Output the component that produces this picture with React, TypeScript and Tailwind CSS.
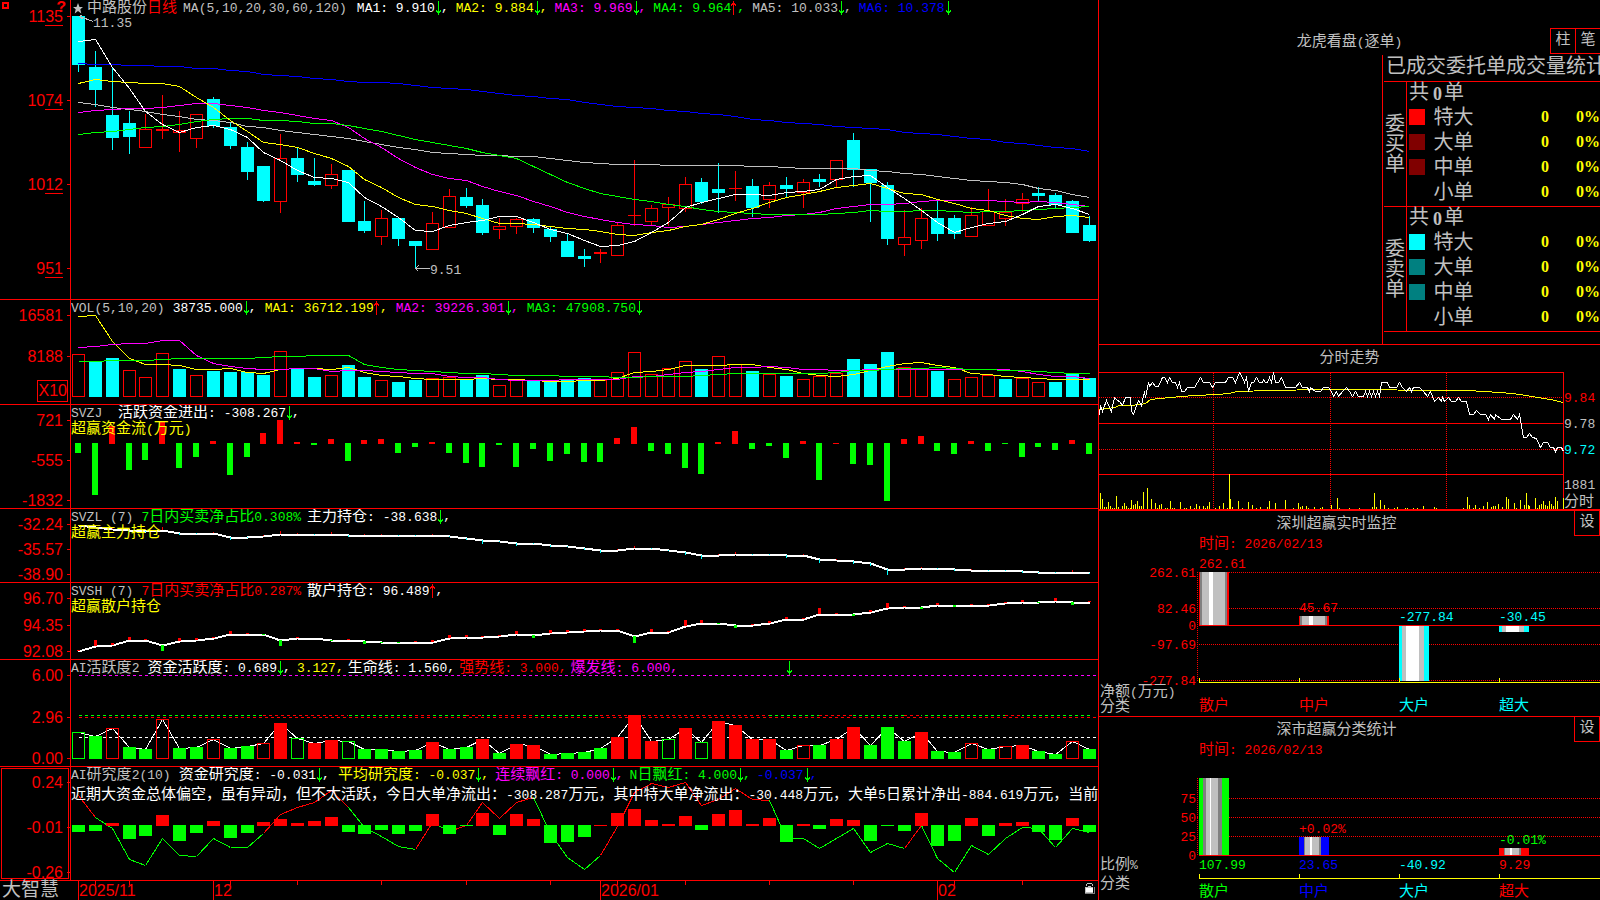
import React from "react";

const RED = "#ff0000";
const GREEN = "#00ff00";
const CYAN = "#00ffff";
const YELLOW = "#ffff00";
const MAGENTA = "#ff00ff";
const SILVER = "#c0c0c0";
const BLUE = "#0000ff";

// c = falling (filled), r = rising (hollow): [kind, high, top, bottom, low]
const candles: [string, number, number, number, number][] = [
  ["c", 16, 16, 65, 72], ["c", 51, 67, 90, 107], ["c", 67, 115, 138, 150], ["c", 111, 123, 137, 154],
  ["r", 114, 129, 148, 148], ["r", 95, 129, 131, 139], ["r", 111, 130, 133, 152], ["r", 114, 114, 139, 148],
  ["c", 97, 99, 126, 128], ["c", 123, 127, 146, 149], ["c", 142, 147, 172, 180], ["c", 166, 166, 201, 202],
  ["r", 134, 158, 202, 213], ["c", 147, 158, 175, 182], ["c", 158, 181, 185, 186], ["r", 164, 174, 186, 189],
  ["c", 170, 170, 222, 222], ["c", 201, 221, 231, 233], ["r", 210, 218, 237, 245], ["c", 218, 218, 239, 246],
  ["c", 241, 241, 246, 268], ["r", 212, 223, 250, 250], ["r", 189, 196, 228, 228], ["c", 188, 197, 206, 208],
  ["c", 199, 205, 233, 235], ["r", 218, 226, 230, 239], ["r", 218, 219, 227, 234], ["c", 218, 219, 228, 233],
  ["c", 226, 229, 237, 242], ["c", 233, 241, 257, 257], ["c", 249, 256, 259, 267], ["r", 249, 252, 254, 263],
  ["r", 222, 225, 256, 256], ["r", 160, 215, 216, 226], ["r", 205, 208, 222, 225], ["r", 197, 204, 208, 226],
  ["r", 177, 184, 209, 212], ["c", 178, 182, 202, 204], ["c", 163, 189, 193, 213], ["r", 171, 188, 189, 201],
  ["c", 179, 186, 208, 217], ["r", 182, 185, 200, 208], ["c", 177, 185, 189, 197], ["r", 179, 182, 193, 208],
  ["c", 174, 179, 182, 187], ["r", 160, 160, 180, 187], ["c", 133, 140, 170, 187], ["c", 169, 169, 183, 222],
  ["c", 182, 185, 239, 245], ["r", 210, 237, 245, 256], ["r", 208, 218, 241, 249], ["c", 200, 218, 234, 241],
  ["c", 215, 218, 234, 239], ["r", 207, 215, 237, 237], ["r", 189, 211, 226, 226], ["r", 199, 212, 219, 226],
  ["r", 193, 199, 204, 212], ["c", 187, 193, 196, 201], ["c", 193, 195, 205, 208], ["c", 200, 201, 233, 233],
  ["c", 216, 225, 241, 242],
];

const priceLines = [
  { color: BLUE, ys: [63, 64, 64, 65, 65, 66, 66, 68, 68, 70, 71, 74, 75, 76, 78, 79, 81, 82, 82, 83, 85, 87, 88, 89, 91, 93, 95, 96, 98, 99, 102, 104, 106, 107, 108, 110, 111, 113, 114, 116, 119, 120, 122, 123, 124, 126, 127, 128, 129, 132, 133, 134, 136, 138, 139, 142, 143, 145, 147, 148, 151] },
  { color: SILVER, ys: [102, 104, 107, 109, 111, 114, 116, 119, 120, 122, 126, 127, 130, 132, 134, 136, 138, 141, 144, 147, 149, 152, 153, 154, 155, 155, 156, 156, 158, 160, 162, 163, 164, 164, 164, 165, 165, 165, 165, 165, 166, 166, 167, 168, 168, 168, 168, 170, 171, 173, 174, 176, 178, 180, 181, 182, 184, 188, 190, 194, 197] },
  { color: MAGENTA, ys: [112, 110, 109, 108, 108, 107, 105, 103, 103, 105, 107, 110, 112, 115, 118, 120, 127, 138, 147, 158, 167, 174, 178, 180, 186, 191, 195, 201, 206, 212, 216, 219, 222, 224, 225, 227, 226, 224, 222, 220, 218, 217, 215, 214, 212, 208, 206, 204, 204, 203, 201, 200, 200, 200, 200, 201, 202, 201, 202, 204, 206] },
  { color: GREEN, ys: [134, 132, 131, 129, 127, 126, 124, 121, 119, 118, 118, 120, 120, 121, 123, 123, 125, 128, 131, 135, 139, 142, 145, 148, 152, 155, 158, 166, 174, 182, 188, 193, 196, 199, 201, 204, 206, 209, 211, 212, 213, 214, 214, 214, 214, 213, 212, 210, 211, 211, 210, 210, 211, 212, 211, 211, 210, 209, 208, 207, 206] },
  { color: YELLOW, ys: [83, 79, 81, 82, 83, 83, 86, 97, 107, 120, 131, 142, 144, 147, 153, 158, 166, 179, 187, 197, 204, 206, 210, 213, 218, 223, 223, 224, 226, 228, 229, 231, 234, 235, 232, 230, 226, 224, 219, 213, 208, 202, 197, 194, 191, 187, 185, 183, 188, 193, 194, 199, 203, 208, 210, 215, 218, 219, 216, 215, 217] },
  { color: "#ffffff", ys: [41, 39, 67, 88, 111, 124, 132, 127, 125, 129, 137, 152, 160, 170, 177, 178, 182, 197, 206, 217, 230, 231, 225, 222, 220, 216, 216, 222, 229, 233, 240, 246, 245, 241, 232, 222, 207, 202, 198, 194, 194, 195, 192, 191, 189, 179, 176, 175, 187, 198, 210, 222, 232, 227, 223, 221, 214, 206, 204, 208, 214] },
];

const volumeKinds = "rccrrrcrccccrccrccrccrrccrrcccc" + "rrrrrrcrrcrcrrrcccrrcrrrcrrccc";
const volumes = [43, 35, 39, 27, 20, 44, 28, 22, 26, 25, 25, 22, 46, 28, 20, 22, 32, 20, 17, 15, 17, 19, 20, 18, 22, 12, 17, 16, 15, 17, 19, 17, 25, 45, 23, 29, 36, 28, 41, 33, 26, 23, 21, 18, 21, 24, 38, 33, 45, 30, 28, 26, 18, 20, 22, 18, 19, 15, 15, 23, 19];
const volumeLines = [
  { color: YELLOW, ys: [16, 15, 41, 58, 64, 64, 65, 69, 69, 68, 72, 73, 69, 68, 68, 69, 67, 72, 75, 76, 78, 79, 79, 79, 78, 79, 79, 80, 81, 81, 80, 80, 78, 72, 71, 69, 65, 65, 65, 64, 64, 67, 69, 73, 75, 76, 74, 70, 66, 63, 62, 65, 67, 73, 74, 76, 77, 78, 79, 79, 79] },
  { color: MAGENTA, ys: [47, 46, 44, 43, 43, 40, 40, 55, 63, 66, 68, 69, 69, 68, 68, 71, 70, 70, 71, 72, 73, 73, 76, 77, 77, 79, 80, 80, 80, 79, 79, 79, 79, 76, 76, 74, 72, 71, 69, 67, 67, 66, 67, 69, 69, 70, 70, 69, 69, 69, 69, 69, 69, 69, 69, 69, 71, 74, 76, 76, 78] },
  { color: GREEN, ys: [61, 61, 60, 60, 60, 59, 58, 58, 58, 58, 58, 57, 56, 56, 55, 55, 55, 64, 67, 69, 70, 71, 72, 73, 73, 74, 75, 75, 75, 76, 76, 76, 77, 77, 76, 76, 76, 75, 74, 73, 73, 73, 73, 73, 73, 72, 70, 70, 69, 68, 68, 67, 68, 69, 69, 70, 70, 71, 72, 73, 73] },
];

const flows = [-10, -52, 18, -27, -17, 23, -25, -14, 3, -32, -14, 11, 24, 2, -2, 5, -18, 4, 5, -10, -4, 2, -10, -20, -24, -2, -24, -6, -18, -11, -19, -19, 6, 17, -8, -11, -25, -31, 2, 13, -6, -3, -15, 3, -37, 1, -21, -22, -58, 5, 8, -8, -11, 3, -8, -1, -14, -4, -7, 4, -11];

const mainHold = [16, 18, 20, 21, 22, 21, 24, 24, 24, 28, 28, 27, 25, 25, 25, 25, 26, 26, 26, 26, 26, 26, 27, 29, 31, 32, 34, 34, 36, 37, 39, 41, 41, 39, 39, 41, 43, 46, 46, 45, 45, 45, 46, 46, 50, 51, 52, 54, 60, 60, 59, 59, 60, 61, 61, 61, 62, 63, 63, 63, 64];
const mainTicks = [0, 1, -1, 2, 2, -3, 2, 1, -1, 3, 1, -1, -3, -1, 1, -2, 2, -1, -1, 1, 1, -1, 1, 2, 4, 1, 3, 1, 2, 1, 2, 3, -1, -2, 1, 1, 3, 4, -1, -2, 1, 1, 3, -1, 4, -1, 3, 3, 6, -1, -1, 1, 2, -1, 1, 1, 2, 1, 1, -2, 1];

const retailHold = [68, 63, 62, 57, 57, 62, 58, 57, 55, 51, 51, 51, 57, 55, 55, 57, 57, 58, 59, 59, 59, 59, 55, 54, 54, 53, 51, 52, 50, 49, 48, 47, 47, 53, 49, 49, 43, 40, 40, 42, 42, 40, 36, 36, 31, 31, 31, 29, 25, 24, 24, 22, 22, 22, 22, 20, 19, 19, 18, 19, 19];
const retailTicks = [-1, -6, -2, -3, -1, 6, -3, -2, -1, -3, -1, 1, 6, -1, 0, 1, -1, 3, 1, 1, -1, -2, -3, -2, -1, -1, -3, 3, -3, -2, -2, -1, -1, 7, -3, -1, -6, -3, 1, 3, -1, -2, -2, -1, -6, -1, 2, -2, -5, -1, 2, -2, 2, -1, -1, -1, -2, 1, -3, 3, -1];

// upper case = filled bar, lower case = hollow bar
const activityKinds = "gGrGGrGGrGGrRgRRgGGGGRGGRGRRGGG" + "GRRRgRgRRRRGrGRRGGGRGGrGrRGGrG";
const activity = [27, 23, 31, 12, 10, 40, 11, 12, 20, 11, 13, 16, 36, 21, 16, 19, 18, 10, 10, 8, 9, 17, 10, 12, 20, 6, 15, 14, 5, 6, 7, 11, 22, 44, 18, 20, 31, 17, 38, 34, 20, 20, 9, 14, 14, 20, 32, 14, 32, 18, 27, 8, 7, 16, 10, 13, 14, 8, 5, 18, 10];
const strongRanges = [[11, 16], [20, 21], [23, 24], [25, 27], [31, 41], [44, 46], [49, 50], [55, 56]];

const research = [-7, -6, 3, -14, -11, 11, -16, -8, 5, -13, -8, 4, 7, 3, 5, 9, -7, -9, -5, -9, -6, 12, -9, -1, 13, -10, 12, 7, -18, -17, -12, 1, 13, 17, 6, 2, 10, -5, 12, 16, 2, 8, -17, 2, -4, 7, 6, -16, -1, -6, 13, -21, -16, 8, -11, 3, 4, -7, -15, 8, -7];
const researchLine = [28, 50, 61, 92, 98, 71, 88, 89, 71, 80, 80, 66, 47, 40, 35, 23, 40, 60, 69, 79, 82, 55, 64, 58, 35, 51, 35, 30, 66, 90, 102, 88, 59, 25, 16, 20, 15, 38, 32, 21, 32, 33, 71, 71, 81, 71, 61, 85, 76, 81, 58, 91, 105, 78, 87, 71, 60, 61, 80, 61, 65];
const researchRed = [0, 11, 12, 13, 14, 15, 20, 22, 23, 24, 25, 26, 31, 32, 33, 34, 35, 36, 37, 38, 39, 40, 49];

const intraday =
  "0,70 1,60 3,66 7,55 12,66 15,52 18,55 20,56 23,60 26,52 31,52 32,66 34,69 37,60 39,55 42,60 45,46 46,52 49,37 50,41 53,37 56,41 59,41 63,32 65,32 68,37 70,32 73,37 76,37 78,42 80,37 82,46 85,46 88,42 95,42 101,32 104,37 110,37 113,42 116,37 126,37 129,32 133,32 136,37 140,27 143,32 145,37 147,32 149,46 152,37 154,37 157,32 160,37 163,37 164,34 166,37 168,37 170,32 172,37 174,27 176,37 179,37 182,32 186,42 196,42 200,37 203,42 208,42 210,46 211,42 216,46 221,46 224,42 229,42 232,46 234,51 237,46 239,51 243,46 247,42 250,46 253,51 256,46 259,51 264,51 266,46 268,51 270,46 272,51 274,46 276,51 278,46 280,51 282,37 288,37 290,42 297,42 300,37 303,42 307,46 310,42 312,46 314,42 320,42 324,46 328,51 331,46 335,56 339,52 342,56 343,52 345,56 349,52 352,56 356,56 359,52 362,56 367,56 370,69 374,69 377,65 381,69 386,69 389,74 391,69 395,74 396,69 402,74 411,74 414,69 418,74 420,69 424,92 427,92 430,88 433,92 437,93 441,102 444,97 448,97 451,102 454,102 456,106 458,102 462,102 464,106";
const intradayAvg =
  "0,64 16,62 19,60 31,60 41,59 46,58 51,54 71,52 94,50 119,49 129,48 138,46 171,45 224,44 368,45 384,46 401,47 421,49 438,52 451,54 464,57";
const intradayVol = [
  [1, 16], [3, 10], [5, 2], [7, 2], [9, 7], [11, 3], [13, 1], [15, 1], [17, 13], [19, 2], [23, 3], [25, 6], [27, 3], [29, 1], [31, 1], [32, 9], [34, 4], [36, 5], [38, 8], [40, 3], [42, 3], [44, 17], [48, 21], [52, 10], [56, 6], [58, 1], [60, 4], [62, 5], [66, 1], [68, 1], [71, 8], [73, 1], [75, 1], [81, 7], [85, 1], [87, 1], [91, 3], [95, 1], [97, 5], [100, 3], [104, 3], [106, 1], [108, 3], [110, 7], [116, 1], [120, 3], [124, 6], [128, 1], [130, 35], [131, 10], [133, 2], [139, 8], [143, 1], [149, 7], [153, 4], [157, 1], [161, 2], [168, 2], [170, 8], [176, 6], [186, 9], [194, 1], [199, 6], [201, 2], [203, 3], [207, 3], [209, 1], [215, 2], [221, 1], [223, 2], [232, 4], [238, 11], [240, 1], [250, 1], [260, 1], [273, 2], [275, 16], [277, 2], [281, 9], [285, 4], [289, 1], [295, 1], [298, 2], [306, 1], [308, 1], [314, 1], [318, 1], [324, 3], [335, 2], [337, 1], [364, 1], [368, 12], [370, 4], [374, 1], [376, 4], [380, 1], [384, 3], [388, 7], [392, 2], [394, 3], [396, 3], [399, 5], [403, 2], [407, 12], [409, 10], [415, 6], [417, 1], [421, 9], [425, 4], [427, 16], [429, 4], [430, 3], [436, 11], [438, 1], [440, 4], [442, 5], [444, 8], [446, 4], [448, 3], [450, 8], [452, 5], [454, 3], [456, 12], [458, 8], [464, 11],
];

const MONO = '"Liberation Mono", "Noto Sans CJK SC", monospace';

const xAt = (i: number) => Math.round(7 + 16.85 * i);
const toPoints = (ys: number[]) => ys.map((y, i) => `${xAt(i)},${y}`).join(" ");
const pct = (v: number, total: number) => `${(v / total) * 100}%`;

// Latin runs are set smaller than the Chinese ones so both keep their cell widths
const Mixed = ({ text, className = "" }: { text: string; className?: string }) => (
  <span className={`whitespace-pre ${className}`}>
    {text.split(/([\u2e80-\uffff]+)/).map((part, i) =>
      i % 2 ? (
        <span key={i} className="text-[15px]">{part}</span>
      ) : (
        <span key={i} className="text-[13px]">{part}</span>
      )
    )}
  </span>
);

const Arrow = ({ up = false }: { up?: boolean }) => (
  <svg width="6" height="14" viewBox="0 0 6 14" shapeRendering="crispEdges" className={`shrink-0 ${up ? "rotate-180" : ""}`} fill={up ? RED : GREEN}>
    <path d="M3 0h1v14h-1zM1 9h1v1h-1zM5 9h1v1h-1zM1 10h5v1h-5zM2 11h3v1h-3z" />
  </svg>
);

type Item = { text: string; color: string; arrow?: "up" | "down"; comma?: boolean; gap?: string };

const Legend = ({ title, items, note }: { title: string; items: Item[]; note?: string }) => (
  <div className="absolute inset-x-0 top-0 leading-4">
    <div className="flex h-4 items-center whitespace-nowrap">
      <Mixed text={title} className="mr-2 text-[#c0c0c0]" />
      {items.map((item, i) => (
        <span key={i} className={`flex items-center ${item.color} ${item.gap ?? "mr-2"}`}>
          <Mixed text={item.text} />
          {item.arrow && <Arrow up={item.arrow === "up"} />}
          {item.comma !== false && <span className="text-[13px]">,</span>}
        </span>
      ))}
    </div>
    {note && <Mixed text={note} className="block text-[#ffff00]" />}
  </div>
);

const Axis = ({ h, labels, underline = false }: { h: number; labels: [number, string][]; underline?: boolean }) => (
  <svg className="absolute inset-y-0 left-0 h-full w-[71px]" fill={RED} shapeRendering="crispEdges">
    {labels.map(([y, text]) => (
      <React.Fragment key={text}>
        <text x="63" y={pct(y, h)} dy="6" textAnchor="end" fontSize="16" fontFamily='"Liberation Sans", sans-serif'>{text}</text>
        <rect x="67" y={pct(y, h)} width="4" height="1" />
        {underline && <rect x="45" y={pct(y + 9, h)} width="18" height="1" />}
      </React.Fragment>
    ))}
  </svg>
);

const Plot = ({ w = 1027, h, top = 0, children }: { w?: number; h: number; top?: number; children: React.ReactNode }) => (
  <svg className="absolute inset-0 h-full w-full" viewBox={`0 ${top} ${w} ${h}`} preserveAspectRatio="none" shapeRendering="crispEdges">
    {children}
  </svg>
);

const Line = ({ points, color, width = 1 }: { points: string; color: string; width?: number }) => (
  <polyline points={points} transform="translate(0.5 0.5)" fill="none" stroke={color} strokeWidth={width} />
);

const Bar = ({ i, y, height, color, hollow = false }: { i: number; y: number; height: number; color: string; hollow?: boolean }) =>
  hollow ? (
    <rect x={xAt(i) - 5.5} y={y + 0.5} width="12" height={Math.max(height - 1, 0)} fill="none" stroke={color} />
  ) : (
    <rect x={xAt(i) - 6} y={y} width="13" height={height} fill={color} />
  );

const Panel = ({ axis, boxed = false, children }: { axis: React.ReactNode; boxed?: boolean; children: React.ReactNode }) => (
  <section className="flex min-h-0 border-b border-[#ff0000]">
    <div className="relative w-[71px] shrink-0 border-r border-[#ff0000]">
      {axis}
      {boxed && <div className="absolute inset-px border border-[#ff0000]" />}
    </div>
    <div className="relative min-w-0 grow overflow-hidden">{children}</div>
  </section>
);

const PricePanel = () => (
  <Panel
    axis={
      <>
        <Axis h={299} underline labels={[[16, "1135"], [100, "1074"], [184, "1012"], [268, "951"]]} />
        <span className="absolute top-0.5 left-0.5 size-[7px] border-2 border-[#ff0000]" />
        <span className="absolute top-0 right-1 text-base leading-4 font-bold text-[#ff0000]">?</span>
      </>
    }
  >
    <Plot h={299}>
      {candles.map(([kind, high, top, bottom, low], i) => {
        const color = kind === "c" ? CYAN : RED;
        return (
          <g key={i}>
            <rect x={xAt(i)} y={high} width="1" height={top - high} fill={color} />
            <rect x={xAt(i)} y={bottom} width="1" height={low - bottom} fill={color} />
            <Bar i={i} y={top} height={bottom - top} color={color} hollow={kind === "r" && bottom - top > 2} />
          </g>
        );
      })}
      {priceLines.map((l) => (
        <Line key={l.color} points={toPoints(l.ys)} color={l.color} />
      ))}
      <g transform="translate(0.5 0.5)" stroke={SILVER} fill="none">
        <path d="M8 16l14 5M11 14l-3 2l4 3M344 268h14M347 265l-3 3l3 3" />
      </g>
    </Plot>
    <svg className="absolute inset-0 h-full w-full" fill={SILVER} fontFamily={MONO} fontSize="13">
      <text x={pct(22, 1027)} y={pct(27, 299)}>11.35</text>
      <text x={pct(359, 1027)} y={pct(274, 299)}>9.51</text>
    </svg>
    <div className="absolute inset-x-0 top-0 flex h-4 items-center whitespace-nowrap">
      <svg width="16" height="14" viewBox="0 0 16 14" fill={SILVER}>
        <path d="M7 2l1.5 4H12L9.3 8.300l1 4.200L7 10l-3.300 2.500 1-4.200L2 6h3.500z" />
      </svg>
      <Mixed text="中路股份" className="text-[#c0c0c0]" />
      <Mixed text="日线" className="mr-1.5 text-[#ff0000]" />
      <Mixed text="MA(5,10,20,30,60,120)" className="mr-2.5 text-[#c0c0c0]" />
      {[
        { text: "MA1: 9.910", color: "text-white" },
        { text: "MA2: 9.884", color: "text-[#ffff00]" },
        { text: "MA3: 9.969", color: "text-[#ff00ff]" },
        { text: "MA4: 9.964", color: "text-[#00ff00]", up: true },
        { text: "MA5: 10.033", color: "text-[#c0c0c0]" },
        { text: "MA6: 10.378", color: "text-[#0000ff]", last: true },
      ].map((m) => (
        <span key={m.text} className={`mr-[7px] flex items-center ${m.color}`}>
          <Mixed text={m.text} />
          <Arrow up={m.up} />
          {!m.last && <span className="text-[13px]">,</span>}
        </span>
      ))}
    </div>
  </Panel>
);

const VolumePanel = () => (
  <Panel
    axis={
      <>
        <Axis h={104} labels={[[15, "16581"], [56, "8188"]]} />
        <span className="absolute right-0.5 bottom-0.5 border border-[#ff0000] pl-px text-base leading-5 text-[#ff0000] font-['Liberation_Sans']">X10</span>
      </>
    }
  >
    <Plot h={104}>
      {volumes.map((v, i) => (
        <Bar key={i} i={i} y={97 - v} height={v} color={volumeKinds[i] === "c" ? CYAN : RED} hollow={volumeKinds[i] === "r"} />
      ))}
      {volumeLines.map((l) => (
        <Line key={l.color} points={toPoints(l.ys)} color={l.color} />
      ))}
    </Plot>
    <Legend
      title="VOL(5,10,20)"
      items={[
        { text: "38735.000", color: "text-white", arrow: "down" },
        { text: "MA1: 36712.199", color: "text-[#ffff00]", arrow: "up" },
        { text: "MA2: 39226.301", color: "text-[#ff00ff]", arrow: "down" },
        { text: "MA3: 47908.750", color: "text-[#00ff00]", arrow: "down", comma: false },
      ]}
    />
  </Panel>
);

const FlowPanel = () => (
  <Panel axis={<Axis h={103} labels={[[15, "721"], [55, "-555"], [95, "-1832"]]} />}>
    <Plot h={103}>
      {flows.map((v, i) => (
        <rect key={i} x={xAt(i) - 3} y={v > 0 ? 39 - v : 38} width="6" height={Math.abs(v)} fill={v > 0 ? RED : GREEN} />
      ))}
    </Plot>
    <Legend title="SVZJ " note="超赢资金流(万元)" items={[{ text: "活跃资金进出: -308.267", color: "text-white", arrow: "down" }]} />
  </Panel>
);

const MainHoldPanel = () => (
  <Panel axis={<Axis h={73} labels={[[15, "-32.24"], [40, "-35.57"], [65, "-38.90"]]} />}>
    <Plot h={73}>
      <Line points={toPoints(mainHold)} color="#ffffff" width={2} />
      {mainTicks.map((v, i) => (
        <rect key={i} x={xAt(i)} y={v < 0 ? mainHold[i] + v : mainHold[i]} width="1" height={Math.abs(v)} fill={v < 0 ? RED : CYAN} />
      ))}
    </Plot>
    <Legend
      title="SVZL (7)"
      note="超赢主力持仓"
      items={[
        { text: "7日内买卖净占比0.308%", color: "text-[#00ff00]", comma: false, gap: "mr-1.5" },
        { text: "主力持仓: -38.638", color: "text-white", arrow: "down" },
      ]}
    />
  </Panel>
);

const RetailHoldPanel = () => (
  <Panel axis={<Axis h={76} labels={[[15, "96.70"], [42, "94.35"], [68, "92.08"]]} />}>
    <Plot h={76}>
      <Line points={toPoints(retailHold)} color="#ffffff" width={2} />
      {retailTicks.map((v, i) => (
        <rect key={i} x={xAt(i) - 1} y={v < 0 ? retailHold[i] + v : retailHold[i]} width="3" height={Math.abs(v)} fill={v < 0 ? RED : GREEN} />
      ))}
    </Plot>
    <Legend
      title="SVSH (7)"
      note="超赢散户持仓"
      items={[
        { text: "7日内买卖净占比0.287%", color: "text-[#ff0000]", comma: false, gap: "mr-1.5" },
        { text: "散户持仓: 96.489", color: "text-white", arrow: "up" },
      ]}
    />
  </Panel>
);

const ActivityPanel = () => (
  <Panel axis={<Axis h={106} labels={[[15, "6.00"], [57, "2.96"], [98, "0.00"]]} />}>
    <Plot h={106}>
      <g strokeDasharray="3 3" transform="translate(0.5 0.5)">
        <path d="M7 15H1027" stroke={MAGENTA} />
        <path d="M7 57H1027" stroke={RED} />
        <path d="M7 77H1027" stroke="#ffffff" />
        <path d="M7 55H1018" stroke={GREEN} />
      </g>
      {strongRanges.map(([a, b]) => (
        <g key={a}>
          <rect x={xAt(a)} y="55" width={xAt(b) - xAt(a)} height="1" fill="#000000" />
          <path d={`M${xAt(a)} 55.5H${xAt(b)}`} stroke={RED} strokeDasharray="3 3" />
        </g>
      ))}
      <Line points={toPoints(activity.map((v) => 99 - v))} color="#ffffff" />
      {activity.map((v, i) => {
        const kind = activityKinds[i];
        return <Bar key={i} i={i} y={99 - v} height={v} color={kind.toLowerCase() === "r" ? RED : GREEN} hollow={kind === kind.toLowerCase()} />;
      })}
    </Plot>
    <Legend
      title="AI活跃度2"
      items={[
        { text: "资金活跃度: 0.689", color: "text-white", arrow: "down", gap: "mr-1.5" },
        { text: "3.127", color: "text-[#ffff00]", gap: "mr-1" },
        { text: "生命线: 1.560", color: "text-white", gap: "mr-1" },
        { text: "强势线: 3.000", color: "text-[#ff0000]", gap: "mr-1" },
        { text: "爆发线: 6.000", color: "text-[#ff00ff]", gap: "mr-27" },
        { text: "", color: "text-white", arrow: "down", comma: false },
      ]}
    />
  </Panel>
);

const ResearchPanel = () => (
  <Panel boxed axis={<Axis h={113} labels={[[15, "0.24"], [60, "-0.01"], [105, "-0.26"]]} />}>
    <Plot h={113}>
      <g transform="translate(0.5 0.5)">
        {researchLine.slice(1).map((y, i) => (
          <line key={i} x1={xAt(i)} y1={researchLine[i]} x2={xAt(i + 1)} y2={y} stroke={researchRed.includes(i) ? RED : GREEN} />
        ))}
      </g>
      {research.map((v, i) => (
        <Bar key={i} i={i} y={v > 0 ? 59 - v : 58} height={Math.abs(v)} color={v > 0 ? RED : GREEN} />
      ))}
    </Plot>
    <Legend
      title="AI研究度2(10)"
      items={[
        { text: "资金研究度: -0.031", color: "text-white", arrow: "down" },
        { text: "平均研究度: -0.037", color: "text-[#ffff00]", arrow: "down", gap: "mr-1.5" },
        { text: "连续飘红: 0.000", color: "text-[#ff00ff]", arrow: "down", gap: "mr-1.5" },
        { text: "N日飘红: 4.000", color: "text-[#00ff00]", arrow: "down", gap: "mr-1.5" },
        { text: "-0.037", color: "text-[#0000ff]", arrow: "down" },
      ]}
    />
    <p className="absolute top-4 left-0 leading-6 text-white">
      <Mixed text="近期大资金总体偏空，虽有异动，但不太活跃，今日大单净流出：-308.287万元，其中特大单净流出：-30.448万元，大单5日累计净出-884.619万元，当前" />
    </p>
  </Panel>
);

const TimeAxis = () => (
  <footer className="flex min-h-0">
    <div className="w-[71px] shrink-0 pl-0.5 text-[19px] leading-5 text-[#c0c0c0]">大智慧</div>
    <div className="relative min-w-0 grow">
      <Plot h={19}>
        {[0, 8, 31, 51].map((i) => (
          <rect key={i} x={xAt(i)} y="0" width="1" height="19" fill={RED} />
        ))}
        {[1, 3, 9, 13, 18, 23, 28, 32, 36, 41, 46, 52, 56].map((i) => (
          <rect key={i} x={xAt(i)} y="0" width="1" height="4" fill={RED} />
        ))}
      </Plot>
      <svg className="absolute inset-0 h-full w-full" fill={RED} fontFamily='"Liberation Sans", sans-serif' fontSize="16">
        {([[0, "2025/11"], [8, "12"], [31, "2026/01"], [51, "02"]] as [number, string][]).map(([i, label]) => (
          <text key={label} x={pct(xAt(i) + 1, 1027)} y="15">{label}</text>
        ))}
      </svg>
      <svg className="absolute top-0.5 right-0.5" width="12" height="12" viewBox="0 0 12 12" shapeRendering="crispEdges">
        <path d="M3 0h5v1h1v2h-1v-2h-5v2h-1v-2h1zM4 3h3v1h-3z" fill={SILVER} />
        <path d="M1 10h9v-6h1v7h-10z" fill="#808080" />
        <rect x="1" y="4" width="8" height="6" fill={SILVER} />
        <rect x="2" y="5" width="7" height="4" fill="#ffffff" />
      </svg>
    </div>
  </footer>
);

const groups = [
  { name: "委买单", colors: ["bg-[#ff0000]", "bg-[#800000]", "bg-[#800000]", ""] },
  { name: "委卖单", colors: ["bg-[#00ffff]", "bg-[#008080]", "bg-[#008080]", ""] },
];
const sizes = ["特大", "大单", "中单", "小单"];

const OrderStats = () => (
  <section className="relative flex min-h-0 flex-col overflow-hidden border-b border-[#ff0000] text-[#c0c0c0]">
    <h2 className="pt-[30px] text-center leading-6">
      <Mixed text="龙虎看盘(逐单)" />
    </h2>
    <div className="absolute top-7 right-0 flex border-y border-[#ff0000] text-[15px]">
      <button className="h-6 w-[25px] border-l border-[#ff0000]">柱</button>
      <button className="h-6 w-[25px] border-l border-[#ff0000]">笔</button>
    </div>
    <div className="ml-auto w-[218px] grow border-l border-[#ff0000] pl-px text-xl">
      <h3 className="h-[26px] overflow-hidden pl-0.5 leading-[26px] whitespace-nowrap">已成交委托单成交量统计</h3>
      <table className="w-full border-y border-[#ff0000]">
        {groups.map((g) => (
          <tbody key={g.name} className="border-t border-[#ff0000]">
            <tr className="h-[25px] leading-6">
              <th rowSpan={5} scope="rowgroup" className="w-[22px] border-r border-[#ff0000] px-px pt-1 text-xl leading-5 font-normal">
                {g.name}
              </th>
              <td colSpan={4} className="p-0 pl-0.5">
                <span className="flex items-center">
                  共<span className="mr-0.5 ml-1 font-['Liberation_Serif'] text-lg leading-6 font-bold">0</span>单
                </span>
              </td>
            </tr>
            {sizes.map((s, i) => (
              <tr key={s} className="h-[25px] leading-6">
                <td className="w-[27px] p-0 pb-1 pl-0.5">
                  <div className={`size-4 ${g.colors[i]}`} />
                </td>
                <td className="p-0">{s}</td>
                <td className="p-0 pb-1 text-right font-['Liberation_Serif'] text-base leading-5 font-bold text-[#ffff00]">0</td>
                <td className="w-[51px] p-0 pb-1 text-right font-['Liberation_Serif'] text-base leading-5 font-bold text-[#ffff00]">0%</td>
              </tr>
            ))}
          </tbody>
        ))}
      </table>
    </div>
  </section>
);

const Intraday = () => (
  <section className="flex min-h-0 flex-col border-b-2 border-[#ff0000]">
    <h2 className="h-[27px] shrink-0 text-center text-[15px] leading-7 text-[#c0c0c0]">分时走势</h2>
    <div className="flex min-h-0 grow">
      <div className="relative grow">
        <Plot w={465} h={137} top={27}>
          <path d="M0 27.500H464.500V164M0 78.500H464M0 129.500H464" fill="none" stroke={RED} />
          <path d="M0 52.500H464M0 104.500H464M114.500 28V164M231.500 28V164M347.500 28V164" stroke={RED} strokeDasharray="1 1" />
          {intradayVol.map(([x, h]) => (
            <rect key={x} x={x} y={164 - h} width="1" height={h} fill={YELLOW} />
          ))}
          <Line points={intradayAvg} color={YELLOW} />
          <Line points={intraday} color="#ffffff" />
        </Plot>
      </div>
      <div className="w-9 shrink-0 pt-3.5 text-[13px] leading-[26px] text-[#c0c0c0]">
        <div className="text-[#ff0000]">9.84</div>
        <div>9.78</div>
        <div className="text-[#00ffff]">9.72</div>
        <div className="pt-3.5 leading-4">1881</div>
        <div className="text-[15px] leading-[18px]">分时</div>
      </div>
    </div>
  </section>
);

type Stripe = [number, string];
const stripes = (c: string, widths: number[]): Stripe[] => {
  const tones = widths.length === 5 ? [c, SILVER, "#ffffff", SILVER, c] : [c, "#808080", SILVER, "#ffffff", SILVER, "#808080", c];
  return widths.map((w, i) => [w, tones[i]] as Stripe);
};

const Cylinder = ({ x, y, h, parts }: { x: number; y: number; h: number; parts: Stripe[] }) => {
  let left = x;
  return (
    <>
      {parts.map(([w, color], i) => {
        const rect = <rect key={i} x={left} y={y} width={w} height={h} fill={color} />;
        left += w;
        return rect;
      })}
    </>
  );
};

const ChartHead = ({ title }: { title: string }) => (
  <div className="relative flex text-[#c0c0c0]">
    <div className="grow">
      <h2 className="h-6 text-center text-[15px] leading-7">{title}</h2>
      <p className="pl-[100px] leading-[18px] text-[#ff0000]">
        <Mixed text="时间: 2026/02/13" />
      </p>
    </div>
    <button className="h-[25px] w-[26px] border-r border-b border-l border-[#ff0000] text-[15px]">设</button>
  </div>
);

type Label = { x: number; y: number; text: string; color: string; end?: boolean; cjk?: boolean };
const Labels = ({ h, items }: { h: number; items: Label[] }) => (
  <svg className="absolute inset-0 h-full w-full" fontFamily={MONO}>
    {items.map((t, i) => (
      <text key={i} x={pct(t.x, 501)} y={pct(t.y, h)} dy="4" fill={t.color} fontSize={t.cjk ? 15 : 13} textAnchor={t.end ? "end" : "start"}>
        {t.text}
      </text>
    ))}
  </svg>
);

const NetChart = () => (
  <section className="relative min-h-0 border-b border-[#ff0000]">
    <Plot w={501} h={205}>
      <path d="M98 61.500H501M98 97.500H501M98 133.500H501M98 169.500H501M98.500 61V170" stroke={RED} strokeDasharray="1 1" />
      <Cylinder x={100} y={61} h={53} parts={stripes(RED, [1, 2, 7, 4, 12, 2, 2])} />
      <Cylinder x={200} y={105} h={9} parts={stripes(RED, [1, 2, 7, 4, 12, 2, 2])} />
      <Cylinder x={300} y={115} h={55} parts={stripes(CYAN, [3, 4, 13, 5, 5])} />
      <Cylinder x={400} y={115} h={6} parts={stripes(CYAN, [3, 4, 13, 5, 5])} />
      <path d="M100 114.500H501" stroke={RED} />
      <path d="M100.500 167V171.500H501M200.500 167v4M300.500 167v4M400.500 167v4" fill="none" stroke={YELLOW} />
    </Plot>
    <Labels
      h={205}
      items={[
        { x: 97, y: 62, text: "262.61", color: RED, end: true },
        { x: 97, y: 98, text: "82.46", color: RED, end: true },
        { x: 97, y: 115, text: "0", color: RED, end: true },
        { x: 97, y: 134, text: "-97.69", color: RED, end: true },
        { x: 97, y: 170, text: "-277.84", color: RED, end: true },
        { x: 100, y: 53, text: "262.61", color: RED },
        { x: 200, y: 97, text: "45.67", color: RED },
        { x: 300, y: 106, text: "-277.84", color: CYAN },
        { x: 400, y: 106, text: "-30.45", color: CYAN },
        { x: 100, y: 195, text: "散户", color: RED, cjk: true },
        { x: 200, y: 195, text: "中户", color: RED, cjk: true },
        { x: 300, y: 195, text: "大户", color: CYAN, cjk: true },
        { x: 400, y: 195, text: "超大", color: CYAN, cjk: true },
      ]}
    />
    <ChartHead title="深圳超赢实时监控" />
    <div className="absolute bottom-px left-px flex flex-col leading-[15px] text-[#c0c0c0]">
      <Mixed text="净额(万元)" />
      <Mixed text="分类" />
    </div>
  </section>
);

const ShareChart = () => (
  <section className="relative min-h-0">
    <Plot w={501} h={183}>
      <path d="M98 81.500H501M98 100.500H501M98 119.500H501M98.500 61V138" stroke={RED} strokeDasharray="1 1" />
      <Cylinder x={100} y={61} h={77} parts={stripes(GREEN, [4, 3, 4, 1, 7, 4, 7])} />
      <Cylinder x={200} y={120} h={18} parts={stripes(BLUE, [5, 1, 5, 2, 7, 2, 8])} />
      <Cylinder x={400} y={131} h={7} parts={stripes(RED, [5, 1, 5, 2, 7, 2, 8])} />
      <path d="M100 138.500H501" stroke={RED} />
      <path d="M100.500 157V161.500H501M200.500 157v4M300.500 157v4M400.500 157v4" fill="none" stroke={YELLOW} />
    </Plot>
    <Labels
      h={183}
      items={[
        { x: 97, y: 82, text: "75", color: RED, end: true },
        { x: 97, y: 101, text: "50", color: RED, end: true },
        { x: 97, y: 120, text: "25", color: RED, end: true },
        { x: 97, y: 139, text: "0", color: RED, end: true },
        { x: 200, y: 112, text: "+0.02%", color: RED },
        { x: 400, y: 123, text: "-0.01%", color: GREEN },
        { x: 100, y: 148, text: "107.99", color: GREEN },
        { x: 200, y: 148, text: "23.65", color: BLUE },
        { x: 300, y: 148, text: "-40.92", color: CYAN },
        { x: 400, y: 148, text: "9.29", color: RED },
        { x: 100, y: 175, text: "散户", color: GREEN, cjk: true },
        { x: 200, y: 175, text: "中户", color: BLUE, cjk: true },
        { x: 300, y: 175, text: "大户", color: CYAN, cjk: true },
        { x: 400, y: 175, text: "超大", color: RED, cjk: true },
      ]}
    />
    <ChartHead title="深市超赢分类统计" />
    <div className="absolute bottom-1.5 left-px flex flex-col leading-[18px] text-[#c0c0c0]">
      <Mixed text="比例%" />
      <Mixed text="分类" />
    </div>
  </section>
);

const App = () => {
  return (
    <div
      className="grid h-screen grid-cols-[1099fr_501fr] grid-rows-[minmax(0,1fr)] overflow-hidden bg-black"
      style={{ fontFamily: MONO }}
    >
      {/* Daily chart and indicators */}
      <main className="grid min-h-0 min-w-0 grid-rows-[300fr_105fr_104fr_74fr_77fr_107fr_114fr_19fr] border-r border-[#ff0000]">
        <PricePanel />
        <VolumePanel />
        <FlowPanel />
        <MainHoldPanel />
        <RetailHoldPanel />
        <ActivityPanel />
        <ResearchPanel />
        <TimeAxis />
      </main>

      {/* Order flow sidebar */}
      <aside className="grid min-h-0 min-w-0 grid-rows-[345fr_166fr_206fr_183fr]">
        <OrderStats />
        <Intraday />
        <NetChart />
        <ShareChart />
      </aside>
    </div>
  );
};

export default App;
